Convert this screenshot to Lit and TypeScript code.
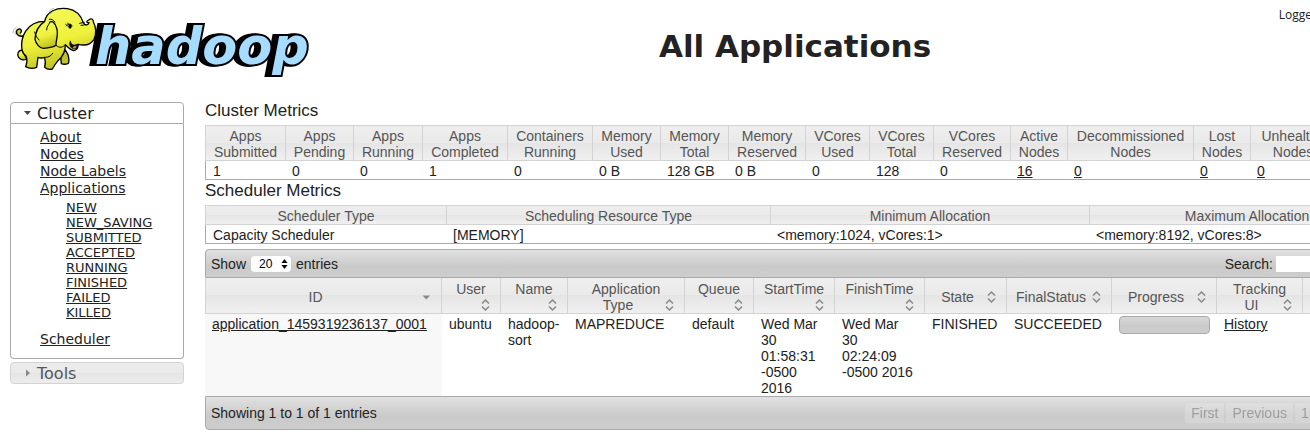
import { LitElement, html, css, svg } from "lit";
import { customElement } from "lit/decorators.js";

interface Metric {
  label: string;
  value: string;
  width: number | null;
  link?: boolean;
}

const CLUSTER_METRICS: Metric[] = [
  { label: "Apps Submitted", value: "1", width: 80 },
  { label: "Apps Pending", value: "0", width: 68 },
  { label: "Apps Running", value: "0", width: 69 },
  { label: "Apps Completed", value: "1", width: 85 },
  { label: "Containers Running", value: "0", width: 85 },
  { label: "Memory Used", value: "0 B", width: 68 },
  { label: "Memory Total", value: "128 GB", width: 68 },
  { label: "Memory Reserved", value: "0 B", width: 77 },
  { label: "VCores Used", value: "0", width: 64 },
  { label: "VCores Total", value: "128", width: 64 },
  { label: "VCores Reserved", value: "0", width: 77 },
  { label: "Active Nodes", value: "16", width: 57, link: true },
  { label: "Decommissioned Nodes", value: "0", width: 126, link: true },
  { label: "Lost Nodes", value: "0", width: 57, link: true },
  { label: "Unhealthy Nodes", value: "0", width: 85, link: true },
  { label: "Rebooted Nodes", value: "0", width: null, link: true },
];

const SCHEDULER_METRICS: Metric[] = [
  { label: "Scheduler Type", value: "Capacity Scheduler", width: 241 },
  { label: "Scheduling Resource Type", value: "[MEMORY]", width: 324 },
  { label: "Minimum Allocation", value: "<memory:1024, vCores:1>", width: 319 },
  { label: "Maximum Allocation", value: "<memory:8192, vCores:8>", width: null },
];

const APP_COLUMNS: { lines: string[]; width: number | null; sorted?: boolean }[] = [
  { lines: ["ID"], width: 237, sorted: true },
  { lines: ["User"], width: 59 },
  { lines: ["Name"], width: 67 },
  { lines: ["Application", "Type"], width: 117 },
  { lines: ["Queue"], width: 69 },
  { lines: ["StartTime"], width: 81 },
  { lines: ["FinishTime"], width: 90 },
  { lines: ["State"], width: 82 },
  { lines: ["FinalStatus"], width: 105 },
  { lines: ["Progress"], width: 105 },
  { lines: ["Tracking", "UI"], width: 86 },
  { lines: ["Blacklisted", "Nodes"], width: null },
];

const APP_STATES = ["NEW", "NEW_SAVING", "SUBMITTED", "ACCEPTED", "RUNNING", "FINISHED", "FAILED", "KILLED"];

const colgroup = (cols: { width: number | null }[]) => html`<colgroup>
  ${cols.map((c) => (c.width ? html`<col style="width:${c.width}px" />` : html`<col />`))}
</colgroup>`;

@customElement("hadoop-logo")
export class HadoopLogo extends LitElement {
  static styles = css`
    :host { display: block; }
    svg { display: block; }
    .word {
      font: italic bold 51px "DejaVu Sans", Verdana, sans-serif;
      fill: #a5dcff; stroke: #000; stroke-width: 4px; stroke-linejoin: miter; paint-order: stroke;
      filter: drop-shadow(-2px 0 0 #000) drop-shadow(-3px 0 0 #000);
    }
  `;

  render() {
    return html`<svg width="312" height="84" viewBox="0 0 312 84" role="img" aria-label="hadoop">
      <defs>
        <linearGradient id="skin" x1="0" y1="0" x2="0.3" y2="1">
          <stop offset="0" stop-color="#f4fa5c" />
          <stop offset="0.6" stop-color="#eef23c" />
          <stop offset="1" stop-color="#c3c425" />
        </linearGradient>
      </defs>
      <text class="word" x="95" y="64">hadoop</text>
      ${this.elephant()}
    </svg>`;
  }

  private elephant() {
    return svg`<g transform="scale(0.33333)" stroke="#000" stroke-width="4" stroke-linejoin="round" stroke-linecap="round" fill="url(#skin)">
      <path d="M66 150 C54 152 50 162 56 172 C62 180 72 182 80 176 Z" />
      <path d="M182 168 L184 191 Q194 195 205 190 Q209 184 204 164 L196 150 Z" fill="#bfc02b" />
      <path d="M68 108 C52 112 44 96 54 88 C62 83 68 94 61 99" fill="#cfd433" />
      <path d="M66 150 C60 112 80 64 134 64 C140 34 170 22 202 26 C228 30 242 44 250 68 C256 80 266 74 267 68 C258 68 258 64 266 60 C274 54 280 56 280 66 C288 80 290 102 282 118 C274 132 256 138 234 133 C236 148 222 156 212 148 C206 144 200 138 196 134 C196 154 188 170 174 182 Q164 194 157 207 Q144 211 134 202 Q138 188 134 172 Q124 176 114 172 L110 202 Q92 209 77 200 Q84 180 78 168 Q68 160 66 150 Z" />
      <path d="M211 124 C214 136 224 138 232 132 C236 144 222 151 214 143 C208 136 208 130 211 124 Z" fill="#111" stroke-width="2" />
      <path d="M218 144 Q222 136 230 139 Q227 148 218 144 Z" fill="#d88" stroke="none" />
      <path d="M134 64 C116 76 106 94 105 118 C108 130 118 145 130 145 C146 144 160 142 168 136 C166 126 178 100 169 82 C166 70 158 62 150 66" />
      <path d="M150 66 C145 78 140 78 140 90 M148 58 C154 56 160 60 165 66" fill="none" stroke-width="3" />
      <path d="M104 96 C108 108 110 112 117 120 M168 136 C180 146 188 142 196 134 M137 172 C148 172 154 166 158 160" fill="none" stroke-width="3" />
      <path d="M199 78 C205 70 212 70 217 78 M197 73 L202 77 M203 69 L206 73" fill="none" stroke-width="2.5" />
      <ellipse cx="210" cy="79" rx="5" ry="7" fill="#000" stroke="none" />
      <path d="M239 70 L253 67 M243 76 L252 75" fill="none" stroke-width="3" />
      <path d="M147 34 Q151 27 162 25 M151 41 Q156 34 164 31 M38 98 Q39 86 49 82 M45 103 Q44 94 49 89" fill="none" stroke="#777" stroke-width="1.5" />
    </g>`;
  }
}

@customElement("app-sidebar")
export class AppSidebar extends LitElement {
  static styles = css`
    :host { display: block; font: 14px/17px "DejaVu Sans", Verdana, sans-serif; color: #222; }
    h3 { margin: 0; font-weight: normal; }
    .head {
      display: flex; align-items: center; gap: 5px; width: 100%; height: 22px; padding: 0 12px;
      border: 1px solid #aaa; border-radius: 4px 4px 0 0; background: #fff;
      font: inherit; font-size: 16px; color: #222; text-align: left; box-sizing: border-box;
    }
    .closed {
      margin-top: 3px; border-color: #d3d3d3; border-radius: 4px; color: #555;
      background: linear-gradient(#ececec, #eaeaea 50%, #e5e5e5 50%, #ededed);
    }
    .panel { border: 1px solid #aaa; border-top: 0; border-radius: 0 0 4px 4px; padding: 5px 0 10px 29px; }
    ul { list-style: none; margin: 0; padding: 0; }
    .states { margin: 3px 0 11px; padding-left: 26px; font-size: 13px; line-height: 15px; }
    a { color: inherit; }
  `;

  render() {
    return html`<nav>
      <h3>
        <button class="head" aria-expanded="true">
          <svg width="9" height="8" viewBox="0 0 9 8"><path d="M1 2H8L4.500 6Z" fill="#454545" /></svg>Cluster
        </button>
      </h3>
      <div class="panel">
        <ul>
          <li><a href="#about">About</a></li>
          <li><a href="#nodes">Nodes</a></li>
          <li><a href="#labels">Node Labels</a></li>
          <li>
            <a href="#apps">Applications</a>
            <ul class="states">
              ${APP_STATES.map((s) => html`<li><a href="#${s}">${s}</a></li>`)}
            </ul>
          </li>
          <li><a href="#scheduler">Scheduler</a></li>
        </ul>
      </div>
      <h3>
        <button class="head closed" aria-expanded="false">
          <svg width="9" height="8" viewBox="0 0 9 8"><path d="M3 0.500V7.500L7 4Z" fill="#888" /></svg>Tools
        </button>
      </h3>
    </nav>`;
  }
}

@customElement("app-root")
export class AppRoot extends LitElement {
  static styles = css`
    :host {
      display: block; overflow: hidden; background: #fff; color: #222;
      font: 14px/16px "Liberation Sans", Helvetica, Arial, sans-serif;
    }
    .page { min-width: 1415px; box-sizing: border-box; padding: 0 10px 6px 0; }
    header { display: grid; grid-template-columns: 185px 1fr; position: relative; height: 102px; }
    h1 { margin: 27px 0 0; text-align: center; font: bold 31px/38px "DejaVu Sans", Verdana, sans-serif; }
    .user { position: absolute; top: 7px; right: 11px; font: 12px/16px "Open Sans", "Noto Sans", sans-serif; }
    .body { display: grid; grid-template-columns: 174px minmax(0, 1fr); gap: 21px; padding-left: 10px; align-items: start; }
    h2 { margin: 0; font-size: 17px; line-height: 16px; font-weight: normal; }
    .metrics { padding-top: 1px; margin-bottom: 3px; }
    a { color: inherit; }

    table { width: 100%; table-layout: fixed; border-collapse: separate; border-spacing: 0; }
    th {
      padding: 2px 7px 0; border: 1px solid #d3d3d3; border-width: 1px 0 1px 1px; color: #555; font-weight: normal;
      background: linear-gradient(#eee, #eaeaea 50%, #e5e5e5 50%, #f0f0f0);
    }
    td { padding: 2px 7px 0; vertical-align: top; }
    .box { margin-top: 6px; }
    .box td { border-bottom: 1px solid #aaa; white-space: nowrap; }
    .box td:first-child { border-left: 1px solid #aaa; }
    .box td:last-child { border-right: 1px solid #aaa; }
    .box th:last-child { border-right-width: 1px; }

    .bar {
      display: flex; align-items: center; justify-content: space-between; box-sizing: border-box;
      padding: 0 6px 0 5px; border: 1px solid #aaa; background: linear-gradient(#e1e1e1, #cacaca 60%, #cdcdcd);
    }
    .top { height: 29px; margin-top: 5px; border-radius: 4px 4px 0 0; }
    .bottom { height: 34px; padding-right: 5px; border-radius: 0 0 4px 4px; }
    .length { display: flex; align-items: center; gap: 5px; }
    .picker { display: grid; align-items: center; width: 40px; }
    .picker select, .picker svg { grid-area: 1 / 1; }
    .picker svg { justify-self: end; margin-right: 3px; pointer-events: none; }
    select {
      appearance: none; width: 100%; height: 16px; border: 0; border-radius: 4px; padding: 0 8px;
      background: #fff; color: #000; font: 12px/16px "Liberation Sans", Helvetica, sans-serif;
    }
    .search { display: flex; align-items: center; gap: 3px; }
    .search input { width: 122px; height: 16px; box-sizing: border-box; border: 0; padding: 0 2px; background: #fff; font: inherit; }

    .apps th { padding: 3px 7px 0; border-width: 0 1px 1px 0; }
    .apps th:first-child { border-left-width: 1px; }
    .sort { display: block; width: 100%; margin: 0; padding: 0; border: 0; background: none; color: inherit; font: inherit; text-align: center; }
    .sort svg { float: right; display: block; }
    .sorted { background: #f8f8f8; }
    .progress { height: 18px; box-sizing: border-box; border: 1px solid #aaa; border-radius: 4px; background: linear-gradient(#d8d8d8, #cacaca 60%, #cecece); }
    .pages { display: flex; }
    .pages button {
      height: 22px; padding: 0 6px; border: 1px solid #d3d3d3; background: #e6e6e6; color: #555;
      font: inherit; opacity: 0.4;
    }
    .pages button:first-child { border-radius: 4px 0 0 4px; }
    .pages button:last-child { border-radius: 0 4px 4px 0; }
  `;

  private metricsTable(rows: Metric[], label: string) {
    return html`<table class="box" aria-label=${label}>
      ${colgroup(rows)}
      <thead><tr>${rows.map((m) => html`<th scope="col">${m.label}</th>`)}</tr></thead>
      <tbody><tr>${rows.map((m) => html`<td>${m.link ? html`<a href="#nodes">${m.value}</a>` : m.value}</td>`)}</tr></tbody>
    </table>`;
  }

  private sortIcon(sorted?: boolean) {
    return sorted
      ? html`<svg width="16" height="16" viewBox="0 0 16 16"><path d="M4.500 6.500H12L8.250 10.500Z" fill="#888" /></svg>`
      : html`<svg width="16" height="16" viewBox="0 0 16 16"><path d="M5 6.500L8.500 3L12 6.500M5 9.500L8.500 13L12 9.500" fill="none" stroke="#888" stroke-width="1.500" /></svg>`;
  }

  render() {
    return html`<div class="page">
      <header>
        <hadoop-logo></hadoop-logo>
        <h1>All Applications</h1>
        <div class="user">Logged in as: dr.who</div>
      </header>
      <div class="body">
        <app-sidebar></app-sidebar>
        <main>
          <section class="metrics">
            <h2>Cluster Metrics</h2>
            ${this.metricsTable(CLUSTER_METRICS, "Cluster Metrics")}
          </section>
          <section>
            <h2>Scheduler Metrics</h2>
            ${this.metricsTable(SCHEDULER_METRICS, "Scheduler Metrics")}
          </section>
          <section>
            <div class="bar top">
              <div class="length">
                <label for="length">Show</label>
                <span class="picker">
                  <select id="length"><option>20</option><option>40</option><option>60</option></select>
                  <svg width="7" height="12" viewBox="0 0 7 12"><path d="M0.500 5L3.500 1L6.500 5ZM0.500 7L3.500 11L6.500 7Z" /></svg>
                </span>
                <span>entries</span>
              </div>
              <div class="search"><label for="search">Search:</label><input id="search" type="text" /></div>
            </div>
            <table class="apps" aria-label="Applications">
              ${colgroup(APP_COLUMNS)}
              <thead>
                <tr>
                  ${APP_COLUMNS.map(
                    (c) => html`<th scope="col"><button class="sort">${c.lines.map((l, i) => (i ? html`<br />${l}` : l))}${this.sortIcon(c.sorted)}</button></th>`
                  )}
                </tr>
              </thead>
              <tbody>
                <tr>
                  <td class="sorted"><a href="#app">application_1459319236137_0001</a></td>
                  <td>ubuntu</td>
                  <td>hadoop-sort</td>
                  <td>MAPREDUCE</td>
                  <td>default</td>
                  <td>Wed Mar 30 01:58:31 -0500 2016</td>
                  <td>Wed Mar<br />30<br />02:24:09<br />-0500 2016</td>
                  <td>FINISHED</td>
                  <td>SUCCEEDED</td>
                  <td><div class="progress" role="progressbar" aria-valuenow="100"></div></td>
                  <td><a href="#history">History</a></td>
                  <td>0</td>
                </tr>
              </tbody>
            </table>
            <div class="bar bottom">
              <span>Showing 1 to 1 of 1 entries</span>
              <div class="pages">
                ${["First", "Previous", "1", "Next", "Last"].map((p) => html`<button>${p}</button>`)}
              </div>
            </div>
          </section>
        </main>
      </div>
    </div>`;
  }
}
